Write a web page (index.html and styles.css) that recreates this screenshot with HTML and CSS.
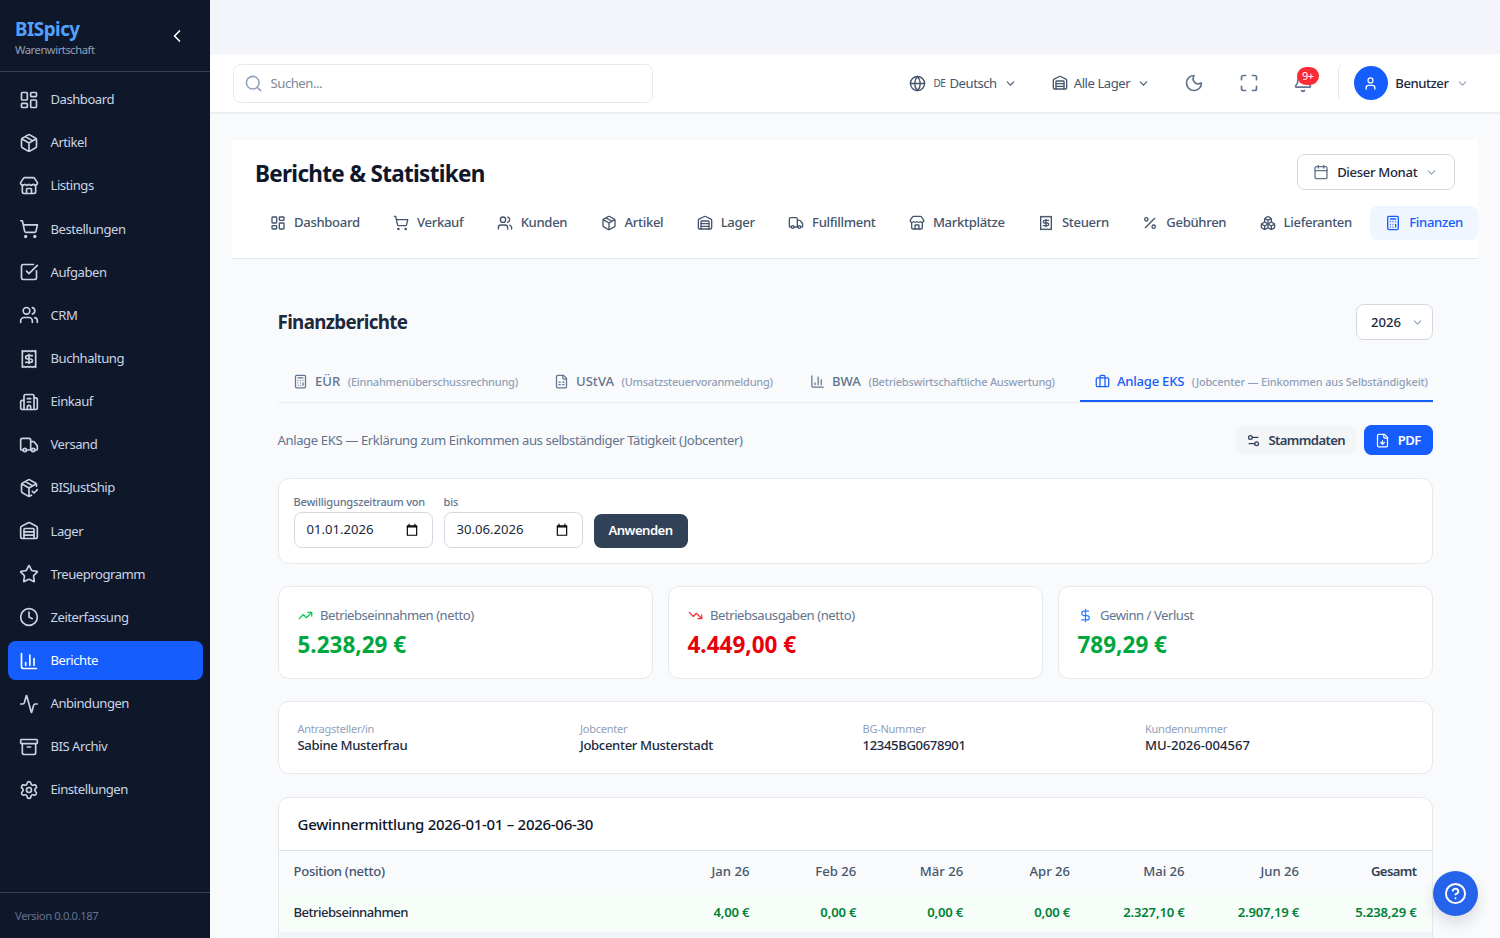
FILE: index.html
```html
<!DOCTYPE html>
<html lang="de">
<head>
    <meta charset="UTF-8">
    <meta name="viewport" content="width=device-width, initial-scale=1.0">
    <title>BISpicy - Berichte</title>
    <link rel="stylesheet" href="styles.css">
</head>
<body>
    <!-- Icons -->
    <svg class="sprite">
        <symbol id="dashboard" viewBox="0 0 24 24"><rect x="3" y="3" width="7" height="9" rx="1"/><rect x="14" y="3" width="7" height="5" rx="1"/><rect x="14" y="12" width="7" height="9" rx="1"/><rect x="3" y="16" width="7" height="5" rx="1"/></symbol>
        <symbol id="package" viewBox="0 0 24 24"><path d="M11 21.73a2 2 0 0 0 2 0l7-4A2 2 0 0 0 21 16V8a2 2 0 0 0-1-1.73l-7-4a2 2 0 0 0-2 0l-7 4A2 2 0 0 0 3 8v8a2 2 0 0 0 1 1.73zM12 22V12M3.29 7 12 12l8.71-5M7.5 4.27l9 5.15"/></symbol>
        <symbol id="store" viewBox="0 0 24 24"><path d="M15 21v-5a1 1 0 0 0-1-1h-4a1 1 0 0 0-1 1v5"/><path d="M17.774 10.31a1.12 1.12 0 0 0-1.549 0 2.5 2.5 0 0 1-3.451 0 1.12 1.12 0 0 0-1.548 0 2.5 2.5 0 0 1-3.452 0 1.12 1.12 0 0 0-1.549 0 2.5 2.5 0 0 1-3.77-3.248l2.889-4.184A2 2 0 0 1 7 2h10a2 2 0 0 1 1.653.873l2.895 4.192a2.5 2.5 0 0 1-3.774 3.244"/><path d="M4 10.95V19a2 2 0 0 0 2 2h12a2 2 0 0 0 2-2v-8.05"/></symbol>
        <symbol id="cart" viewBox="0 0 24 24"><circle cx="8" cy="21" r="1"/><circle cx="19" cy="21" r="1"/><path d="M2.05 2.05h2l2.66 12.42a2 2 0 0 0 2 1.58h9.78a2 2 0 0 0 1.95-1.57l1.65-7.43H5.12"/></symbol>
        <symbol id="check" viewBox="0 0 24 24"><path d="M21 10.5V19a2 2 0 0 1-2 2H5a2 2 0 0 1-2-2V5a2 2 0 0 1 2-2h12.344"/><path d="m9 11 3 3L22 4"/></symbol>
        <symbol id="users" viewBox="0 0 24 24"><path d="M16 21v-2a4 4 0 0 0-4-4H6a4 4 0 0 0-4 4v2"/><circle cx="9" cy="7" r="4"/><path d="M22 21v-2a4 4 0 0 0-3-3.87M16 3.13a4 4 0 0 1 0 7.75"/></symbol>
        <symbol id="receipt" viewBox="0 0 24 24"><path d="M4 2v20l2-1 2 1 2-1 2 1 2-1 2 1 2-1 2 1V2l-2 1-2-1-2 1-2-1-2 1-2-1-2 1Z"/><path d="M16 8h-6a2 2 0 1 0 0 4h4a2 2 0 1 1 0 4H8M12 17.5v-11"/></symbol>
        <symbol id="building" viewBox="0 0 24 24"><path d="M10 12h4M10 8h4M14 21v-3a2 2 0 0 0-4 0v3"/><path d="M6 10H4a2 2 0 0 0-2 2v7a2 2 0 0 0 2 2h16a2 2 0 0 0 2-2V9a2 2 0 0 0-2-2h-2"/><path d="M6 21V5a2 2 0 0 1 2-2h8a2 2 0 0 1 2 2v16"/></symbol>
        <symbol id="truck" viewBox="0 0 24 24"><path d="M14 18V6a2 2 0 0 0-2-2H4a2 2 0 0 0-2 2v11a1 1 0 0 0 1 1h2M15 18H9M19 18h2a1 1 0 0 0 1-1v-3.65a1 1 0 0 0-.22-.624l-3.48-4.35A1 1 0 0 0 17.52 8H14"/><circle cx="17" cy="18" r="2"/><circle cx="7" cy="18" r="2"/></symbol>
        <symbol id="package-check" viewBox="0 0 24 24"><path d="m16 16 2 2 4-4"/><path d="M21 10V8a2 2 0 0 0-1-1.73l-7-4a2 2 0 0 0-2 0l-7 4A2 2 0 0 0 3 8v8a2 2 0 0 0 1 1.73l7 4a2 2 0 0 0 2 0l2-1.14M7.5 4.27l9 5.15M3.29 7 12 12l8.71-5M12 22V12"/></symbol>
        <symbol id="warehouse" viewBox="0 0 24 24"><path d="M18 21V10a1 1 0 0 0-1-1H7a1 1 0 0 0-1 1v11"/><path d="M22 19a2 2 0 0 1-2 2H4a2 2 0 0 1-2-2V8a2 2 0 0 1 1.132-1.803l7.95-3.974a2 2 0 0 1 1.837 0l7.948 3.974A2 2 0 0 1 22 8zM6 13h12M6 17h12"/></symbol>
        <symbol id="star" viewBox="0 0 24 24"><path d="M11.525 2.295a.53.53 0 0 1 .95 0l2.31 4.679a2.123 2.123 0 0 0 1.595 1.16l5.166.756a.53.53 0 0 1 .294.904l-3.736 3.638a2.123 2.123 0 0 0-.611 1.878l.882 5.14a.53.53 0 0 1-.771.56l-4.618-2.428a2.122 2.122 0 0 0-1.973 0L6.396 21.01a.53.53 0 0 1-.77-.56l.881-5.139a2.122 2.122 0 0 0-.611-1.879L2.16 9.795a.53.53 0 0 1 .294-.906l5.165-.755a2.122 2.122 0 0 0 1.597-1.16z"/></symbol>
        <symbol id="clock" viewBox="0 0 24 24"><circle cx="12" cy="12" r="10"/><path d="M12 6v6l4 2"/></symbol>
        <symbol id="chart" viewBox="0 0 24 24"><path d="M3 3v16a2 2 0 0 0 2 2h16M18 17V9M13 17V5M8 17v-3"/></symbol>
        <symbol id="activity" viewBox="0 0 24 24"><path d="M22 12h-2.48a2 2 0 0 0-1.93 1.46l-2.35 8.36a.25.25 0 0 1-.48 0L9.24 2.18a.25.25 0 0 0-.48 0l-2.35 8.36A2 2 0 0 1 4.49 12H2"/></symbol>
        <symbol id="archive" viewBox="0 0 24 24"><rect x="2" y="3" width="20" height="5" rx="1"/><path d="M4 8v11a2 2 0 0 0 2 2h12a2 2 0 0 0 2-2V8M10 12h4"/></symbol>
        <symbol id="settings" viewBox="0 0 24 24"><path d="M9.671 4.136a2.34 2.34 0 0 1 4.659 0 2.34 2.34 0 0 0 3.319 1.915 2.34 2.34 0 0 1 2.33 4.033 2.34 2.34 0 0 0 0 3.831 2.34 2.34 0 0 1-2.33 4.033 2.34 2.34 0 0 0-3.319 1.915 2.34 2.34 0 0 1-4.659 0 2.34 2.34 0 0 0-3.32-1.915 2.34 2.34 0 0 1-2.33-4.033 2.34 2.34 0 0 0 0-3.831A2.34 2.34 0 0 1 6.35 6.051a2.34 2.34 0 0 0 3.319-1.915"/><circle cx="12" cy="12" r="3"/></symbol>
        <symbol id="search" viewBox="0 0 24 24"><circle cx="11" cy="11" r="8"/><path d="m21 21-4.34-4.34"/></symbol>
        <symbol id="globe" viewBox="0 0 24 24"><circle cx="12" cy="12" r="10"/><path d="M12 2a14.5 14.5 0 0 0 0 20 14.5 14.5 0 0 0 0-20M2 12h20"/></symbol>
        <symbol id="moon" viewBox="0 0 24 24"><path d="M20.985 12.486a9 9 0 1 1-9.473-9.472c.405-.022.617.46.402.803a6 6 0 0 0 8.268 8.268c.344-.215.825-.004.803.401"/></symbol>
        <symbol id="maximize" viewBox="0 0 24 24"><path d="M8 3H5a2 2 0 0 0-2 2v3M21 8V5a2 2 0 0 0-2-2h-3M3 16v3a2 2 0 0 0 2 2h3M16 21h3a2 2 0 0 0 2-2v-3"/></symbol>
        <symbol id="bell" viewBox="0 0 24 24"><path d="M10.268 21a2 2 0 0 0 3.464 0M3.262 15.326A1 1 0 0 0 4 17h16a1 1 0 0 0 .74-1.673C19.41 13.956 18 12.499 18 8A6 6 0 0 0 6 8c0 4.499-1.411 5.956-2.738 7.326"/></symbol>
        <symbol id="user" viewBox="0 0 24 24"><path d="M19 21v-2a4 4 0 0 0-4-4H9a4 4 0 0 0-4 4v2"/><circle cx="12" cy="7" r="4"/></symbol>
        <symbol id="calendar" viewBox="0 0 24 24"><path d="M8 2v4M16 2v4M3 10h18"/><rect x="3" y="4" width="18" height="18" rx="2"/></symbol>
        <symbol id="percent" viewBox="0 0 24 24"><path d="M19 5 5 19"/><circle cx="6.5" cy="6.5" r="2.5"/><circle cx="17.5" cy="17.5" r="2.5"/></symbol>
        <symbol id="boxes" viewBox="0 0 24 24"><path d="M2.97 12.92A2 2 0 0 0 2 14.63v3.24a2 2 0 0 0 .97 1.71l3 1.8a2 2 0 0 0 2.06 0L12 19v-5.5l-5-3-4.03 2.42ZM7 16.5l-4.74-2.85M7 16.5l5-3M7 16.5v5.17M12 13.5V19l3.97 2.38a2 2 0 0 0 2.06 0l3-1.8a2 2 0 0 0 .97-1.71v-3.24a2 2 0 0 0-.97-1.71L17 10.5l-5 3ZM17 16.5l-5-3M17 16.5l4.74-2.85M17 16.5v5.17M7.97 4.42A2 2 0 0 0 7 6.13v4.37l5 3 5-3V6.13a2 2 0 0 0-.97-1.71l-3-1.8a2 2 0 0 0-2.06 0l-3 1.8ZM12 8 7.26 5.15M12 8l4.74-2.85M12 13.5V8"/></symbol>
        <symbol id="calculator" viewBox="0 0 24 24"><rect x="4" y="2" width="16" height="20" rx="2"/><path d="M8 6h8M16 14v4M16 10h.01M12 10h.01M8 10h.01M12 14h.01M8 14h.01M12 18h.01M8 18h.01"/></symbol>
        <symbol id="sheet" viewBox="0 0 24 24"><path d="M15 2H6a2 2 0 0 0-2 2v16a2 2 0 0 0 2 2h12a2 2 0 0 0 2-2V7Z"/><path d="M14 2v4a2 2 0 0 0 2 2h4M8 13h2M14 13h2M8 17h2M14 17h2"/></symbol>
        <symbol id="briefcase" viewBox="0 0 24 24"><path d="M16 20V4a2 2 0 0 0-2-2h-4a2 2 0 0 0-2 2v16"/><rect x="2" y="6" width="20" height="14" rx="2"/></symbol>
        <symbol id="sliders" viewBox="0 0 24 24"><path d="M14 17H5M19 7h-9"/><circle cx="17" cy="17" r="3"/><circle cx="7" cy="7" r="3"/></symbol>
        <symbol id="file-down" viewBox="0 0 24 24"><path d="M15 2H6a2 2 0 0 0-2 2v16a2 2 0 0 0 2 2h12a2 2 0 0 0 2-2V7Z"/><path d="M14 2v4a2 2 0 0 0 2 2h4M12 18v-6M9 15l3 3 3-3"/></symbol>
        <symbol id="trend-up" viewBox="0 0 24 24"><path d="M16 7h6v6M22 7l-8.5 8.5-5-5L2 17"/></symbol>
        <symbol id="trend-down" viewBox="0 0 24 24"><path d="M16 17h6v-6M22 17l-8.5-8.5-5 5L2 7"/></symbol>
        <symbol id="dollar" viewBox="0 0 24 24"><path d="M12 2v20M17 5H9.5a3.5 3.5 0 0 0 0 7h5a3.5 3.5 0 0 1 0 7H6"/></symbol>
        <symbol id="help" viewBox="0 0 24 24"><circle cx="12" cy="12" r="10"/><path d="M9.09 9a3 3 0 0 1 5.83 1c0 2-3 3-3 3M12 17h.01"/></symbol>
        <symbol id="down" viewBox="0 0 24 24"><path d="m6 9 6 6 6-6"/></symbol>
        <symbol id="left" viewBox="0 0 24 24"><path d="m15 18-6-6 6-6"/></symbol>
        <symbol id="date" viewBox="0 0 24 24"><path d="M4 5h16v16H4z"/><path d="M4 6.5h16M7 2v3M17 2v3"/></symbol>
    </svg>

    <aside class="sidebar">
        <div class="brand">
            <div>
                <div class="brand-name">BISpicy</div>
                <div class="brand-sub">Warenwirtschaft</div>
            </div>
            <svg class="icon collapse"><use href="#left"/></svg>
        </div>
        <nav class="menu">
            <a class="menu-item"><svg class="icon"><use href="#dashboard"/></svg>Dashboard</a>
            <a class="menu-item"><svg class="icon"><use href="#package"/></svg>Artikel</a>
            <a class="menu-item"><svg class="icon"><use href="#store"/></svg>Listings</a>
            <a class="menu-item"><svg class="icon"><use href="#cart"/></svg>Bestellungen</a>
            <a class="menu-item"><svg class="icon"><use href="#check"/></svg>Aufgaben</a>
            <a class="menu-item"><svg class="icon"><use href="#users"/></svg>CRM</a>
            <a class="menu-item"><svg class="icon"><use href="#receipt"/></svg>Buchhaltung</a>
            <a class="menu-item"><svg class="icon"><use href="#building"/></svg>Einkauf</a>
            <a class="menu-item"><svg class="icon"><use href="#truck"/></svg>Versand</a>
            <a class="menu-item"><svg class="icon"><use href="#package-check"/></svg>BISJustShip</a>
            <a class="menu-item"><svg class="icon"><use href="#warehouse"/></svg>Lager</a>
            <a class="menu-item"><svg class="icon"><use href="#star"/></svg>Treueprogramm</a>
            <a class="menu-item"><svg class="icon"><use href="#clock"/></svg>Zeiterfassung</a>
            <a class="menu-item active"><svg class="icon"><use href="#chart"/></svg>Berichte</a>
            <a class="menu-item"><svg class="icon"><use href="#activity"/></svg>Anbindungen</a>
            <a class="menu-item"><svg class="icon"><use href="#archive"/></svg>BIS Archiv</a>
            <a class="menu-item"><svg class="icon"><use href="#settings"/></svg>Einstellungen</a>
        </nav>
        <div class="version">Version 0.0.0.187</div>
    </aside>

    <div class="main">
        <header class="topbar">
            <div class="search">
                <svg class="icon"><use href="#search"/></svg>
                <span>Suchen...</span>
            </div>
            <div class="tools">
                <div class="tool language"><svg class="icon"><use href="#globe"/></svg><small>DE</small><span>Deutsch</span><svg class="icon chevron"><use href="#down"/></svg></div>
                <div class="tool depot"><svg class="icon"><use href="#warehouse"/></svg><span>Alle Lager</span><svg class="icon chevron"><use href="#down"/></svg></div>
                <svg class="icon tool-icon"><use href="#moon"/></svg>
                <svg class="icon tool-icon"><use href="#maximize"/></svg>
                <div class="bell"><svg class="icon tool-icon"><use href="#bell"/></svg><span class="badge">9+</span></div>
                <div class="account">
                    <span class="avatar"><svg class="icon"><use href="#user"/></svg></span>
                    <span>Benutzer</span>
                    <svg class="icon chevron"><use href="#down"/></svg>
                </div>
            </div>
        </header>

        <section class="report-head">
            <div class="report-title">
                <h1>Berichte &amp; Statistiken</h1>
                <button class="select period"><svg class="icon"><use href="#calendar"/></svg>Dieser Monat<svg class="icon chevron"><use href="#down"/></svg></button>
            </div>
            <nav class="report-tabs">
                <a class="report-tab"><svg class="icon"><use href="#dashboard"/></svg>Dashboard</a>
                <a class="report-tab"><svg class="icon"><use href="#cart"/></svg>Verkauf</a>
                <a class="report-tab"><svg class="icon"><use href="#users"/></svg>Kunden</a>
                <a class="report-tab"><svg class="icon"><use href="#package"/></svg>Artikel</a>
                <a class="report-tab"><svg class="icon"><use href="#warehouse"/></svg>Lager</a>
                <a class="report-tab"><svg class="icon"><use href="#truck"/></svg>Fulfillment</a>
                <a class="report-tab"><svg class="icon"><use href="#store"/></svg>Marktplätze</a>
                <a class="report-tab"><svg class="icon"><use href="#receipt"/></svg>Steuern</a>
                <a class="report-tab"><svg class="icon"><use href="#percent"/></svg>Gebühren</a>
                <a class="report-tab"><svg class="icon"><use href="#boxes"/></svg>Lieferanten</a>
                <a class="report-tab active"><svg class="icon"><use href="#calculator"/></svg>Finanzen</a>
            </nav>
        </section>

        <main class="finance">
            <div class="finance-title">
                <h2>Finanzberichte</h2>
                <button class="select year">2026<svg class="icon chevron"><use href="#down"/></svg></button>
            </div>

            <nav class="finance-tabs">
                <a class="finance-tab"><svg class="icon"><use href="#calculator"/></svg>EÜR<small>(Einnahmenüberschussrechnung)</small></a>
                <a class="finance-tab"><svg class="icon"><use href="#sheet"/></svg>UStVA<small>(Umsatzsteuervoranmeldung)</small></a>
                <a class="finance-tab"><svg class="icon"><use href="#chart"/></svg>BWA<small>(Betriebswirtschaftliche Auswertung)</small></a>
                <a class="finance-tab active"><svg class="icon"><use href="#briefcase"/></svg>Anlage EKS<small>(Jobcenter — Einkommen aus Selbständigkeit)</small></a>
            </nav>

            <div class="intro">
                <p>Anlage EKS — Erklärung zum Einkommen aus selbständiger Tätigkeit (Jobcenter)</p>
                <button class="btn btn-light"><svg class="icon"><use href="#sliders"/></svg>Stammdaten</button>
                <button class="btn btn-primary"><svg class="icon"><use href="#file-down"/></svg>PDF</button>
            </div>

            <div class="card filter">
                <div class="field">
                    <label>Bewilligungszeitraum von</label>
                    <div class="date-input">01.01.2026<svg class="icon"><use href="#date"/></svg></div>
                </div>
                <div class="field">
                    <label>bis</label>
                    <div class="date-input">30.06.2026<svg class="icon"><use href="#date"/></svg></div>
                </div>
                <button class="btn btn-dark">Anwenden</button>
            </div>

            <div class="stats">
                <div class="card stat">
                    <div class="stat-label"><svg class="icon green"><use href="#trend-up"/></svg>Betriebseinnahmen (netto)</div>
                    <div class="stat-value">5.238,29 €</div>
                </div>
                <div class="card stat">
                    <div class="stat-label"><svg class="icon red"><use href="#trend-down"/></svg>Betriebsausgaben (netto)</div>
                    <div class="stat-value negative">4.449,00 €</div>
                </div>
                <div class="card stat">
                    <div class="stat-label"><svg class="icon blue"><use href="#dollar"/></svg>Gewinn / Verlust</div>
                    <div class="stat-value">789,29 €</div>
                </div>
            </div>

            <div class="card person">
                <div><span>Antragsteller/in</span><b>Sabine Musterfrau</b></div>
                <div><span>Jobcenter</span><b>Jobcenter Musterstadt</b></div>
                <div><span>BG-Nummer</span><b>12345BG0678901</b></div>
                <div><span>Kundennummer</span><b class="number">MU-2026-004567</b></div>
            </div>

            <div class="card result">
                <h3>Gewinnermittlung 2026-01-01 – 2026-06-30</h3>
                <table>
                    <colgroup>
                        <col class="col-name">
                        <col class="col-month" span="4">
                        <col class="col-wide" span="2">
                        <col>
                    </colgroup>
                    <thead>
                        <tr><th>Position (netto)</th><th>Jan 26</th><th>Feb 26</th><th>Mär 26</th><th>Apr 26</th><th>Mai 26</th><th>Jun 26</th><th class="total">Gesamt</th></tr>
                    </thead>
                    <tbody>
                        <tr class="income"><td>Betriebseinnahmen</td><td>4,00 €</td><td>0,00 €</td><td>0,00 €</td><td>0,00 €</td><td>2.327,10 €</td><td>2.907,19 €</td><td>5.238,29 €</td></tr>
                        <tr class="next"><td colspan="8"></td></tr>
                    </tbody>
                </table>
            </div>
        </main>
    </div>

    <button class="help"><svg class="icon"><use href="#help"/></svg></button>
</body>
</html>
```
FILE: styles.css
```css
* {
    box-sizing: border-box;
}
body {
    margin: 0;
    display: flex;
    height: 938px;
    overflow: hidden;
    background: #f9fafc;
    color: #1d293d;
    font-family: "Noto Sans", "Open Sans", sans-serif;
    font-size: 13.1px;
    line-height: 19px;
}
h1, h2, h3, p {
    margin: 0;
}
button {
    border: 0;
    padding: 0;
    font: inherit;
    letter-spacing: inherit;
    color: inherit;
}
.sprite {
    position: absolute;
    width: 0;
    height: 0;
}
.icon {
    width: 15px;
    height: 15px;
    flex: none;
    fill: none;
    stroke: currentColor;
    stroke-width: 2;
    stroke-linecap: round;
    stroke-linejoin: round;
}

/* Sidebar */
.sidebar {
    width: 210px;
    flex: none;
    display: flex;
    flex-direction: column;
    background: #0f172b;
    color: #cad5e2;
    letter-spacing: -0.48px;
}
.brand {
    display: flex;
    justify-content: space-between;
    align-items: center;
    height: 72px;
    padding: 0 23px 0 15px;
    border-bottom: 1px solid #314158;
}
.brand-name {
    font-size: 18.75px;
    line-height: 28px;
    font-weight: 700;
    color: #51a2ff;
}
.brand-sub {
    font-size: 11.25px;
    line-height: 13px;
    color: #90a1b9;
}
.collapse {
    width: 20px;
    height: 20px;
    color: #fff;
}
.menu {
    flex: 1;
    display: flex;
    flex-direction: column;
    gap: 3.75px;
    padding: 8px 7.5px;
}
.menu-item {
    display: flex;
    align-items: center;
    gap: 12px;
    height: 39.4px;
    padding: 0 11px;
    border-radius: 7.5px;
}
.menu-item .icon {
    width: 20px;
    height: 20px;
}
.menu-item.active {
    background: #155dfc;
    color: #fff;
}
.version {
    height: 46px;
    padding: 15px;
    border-top: 1px solid #314158;
    font-size: 11.25px;
    line-height: 15px;
    letter-spacing: -0.4px;
    color: #62748e;
}

/* Header */
.main {
    flex: 1;
    min-width: 0;
    padding-top: 54.5px;
    background: linear-gradient(#f4f5fa 54px, #f9fafc 54px);
}
.topbar {
    display: flex;
    justify-content: space-between;
    align-items: center;
    height: 59px;
    padding: 0 31px 0 22.5px;
    background: #fff;
    border-bottom: 2px solid #eceef1;
    letter-spacing: -0.45px;
}
.search {
    display: flex;
    align-items: center;
    gap: 8px;
    width: 420px;
    height: 39px;
    padding: 0 10px;
    border: 1px solid #e5e9ef;
    border-radius: 7.5px;
    color: #808896;
}
.search .icon {
    width: 19px;
    height: 19px;
    color: #90a1b9;
}
.tools, .tool, .account {
    display: flex;
    align-items: center;
    color: #45556c;
}
.tool small {
    margin: 0 4px 0 8px;
    font-size: 10px;
}
.tool .icon {
    width: 17px;
    height: 17px;
}
.tool .chevron, .account .chevron {
    width: 13px;
    height: 13px;
    margin-left: 7px;
}
.depot {
    margin-left: 35px;
}
.depot .icon:first-child {
    width: 16px;
    height: 16px;
}
.depot span {
    margin-left: 6px;
}
.tool-icon {
    display: block;
    width: 20px;
    height: 20px;
    margin-left: 34.2px;
    color: #62748e;
}
.bell {
    position: relative;
}
.badge {
    position: absolute;
    top: -6px;
    right: -6px;
    padding: 0 4px;
    min-width: 22px;
    height: 18px;
    border-radius: 9px;
    background: #fb2c36;
    color: #fff;
    font-size: 11px;
    line-height: 18px;
    text-align: center;
}
.account {
    gap: 7.5px;
    height: 38px;
    margin-left: 25px;
    padding-left: 15px;
    border-left: 1px solid #e2e8f0;
    border-radius: 6px 0 0 6px;
    color: #1d293d;
    font-weight: 500;
}
.avatar {
    display: flex;
    align-items: center;
    justify-content: center;
    width: 34px;
    height: 34px;
    border-radius: 50%;
    background: #155dfc;
    color: #fff;
}
.account .chevron {
    margin-left: 0;
    color: #90a1b9;
}

/* Report navigation */
.report-head {
    height: 119px;
    margin: 26.5px 22px 0;
    padding-left: 23px;
    background: #fff;
    border-bottom: 1px solid #e2e8f0;
    letter-spacing: -0.33px;
}
.report-title {
    display: flex;
    justify-content: space-between;
    align-items: flex-start;
    padding: 14px 23px 0 0;
    color: #0f172b;
}
h1 {
    margin-top: 2px;
    font-size: 22.5px;
    line-height: 36px;
    font-weight: 700;
    letter-spacing: -0.7px;
}
.select {
    display: flex;
    align-items: center;
    justify-content: center;
    height: 36px;
    border: 1px solid #d3d8e0;
    border-radius: 7.5px;
    background: #fff;
    color: #1d293d;
    font-weight: 500;
}
.select .chevron {
    width: 13px;
    height: 13px;
    color: #90a1b9;
}
.period {
    width: 158.5px;
    gap: 8px;
}
.period .icon:first-child {
    width: 16px;
    height: 16px;
    color: #62748e;
}
.report-tabs {
    display: flex;
    justify-content: space-between;
    margin-top: 13.5px;
}
.report-tab {
    display: flex;
    align-items: center;
    gap: 8px;
    height: 34px;
    padding: 0 15px;
    border-radius: 7.5px;
    color: #45556c;
    font-weight: 500;
    white-space: nowrap;
}
.report-tab .icon {
    width: 16px;
    height: 16px;
}
.report-tab.active {
    background: #eff6ff;
    color: #155dfc;
}

/* Finance */
.finance {
    padding: 45px 67.5px 0;
}
.finance-title, .intro {
    display: flex;
    justify-content: space-between;
    align-items: center;
}
h2 {
    font-size: 18.75px;
    line-height: 36px;
    font-weight: 700;
    letter-spacing: -0.65px;
}
.year {
    width: 77px;
    gap: 10px;
    padding-left: 7px;
}
.finance-tabs {
    display: grid;
    grid-template-columns: 261px 256px 285px 353px;
    height: 42px;
    margin-top: 21px;
    border-bottom: 1.5px solid #e8ebf0;
}
.finance-tab {
    display: flex;
    align-items: center;
    gap: 7.5px;
    padding: 0 0 1px 15px;
    color: #62748e;
    font-weight: 500;
    white-space: nowrap;
}
.finance-tab small {
    font-size: 11px;
    letter-spacing: -0.24px;
    color: #90a1b9;
}
.finance-tab.active {
    color: #155dfc;
    border-bottom: 2px solid #155dfc;
    padding-top: 2px;
    letter-spacing: -0.25px;
}
.finance-tab.active small {
    letter-spacing: -0.17px;
}
.intro {
    margin-top: 22px;
    gap: 8px;
}
.intro p {
    flex: 1;
    color: #62748e;
    letter-spacing: -0.39px;
}
.btn {
    display: flex;
    align-items: center;
    justify-content: center;
    gap: 7.5px;
    height: 30px;
    border-radius: 7.5px;
    font-weight: 600;
    letter-spacing: -0.6px;
}
.btn-light {
    width: 120px;
    background: #f4f5f7;
    color: #314158;
}
.btn-primary {
    width: 69px;
    background: #155dfc;
    color: #fff;
}
.btn-dark {
    width: 94px;
    height: 34px;
    background: #314158;
    color: #fff;
    letter-spacing: -0.5px;
}
.card {
    border: 1px solid #e5e9ee;
    border-radius: 11px;
    background: #fff;
}
.filter {
    display: flex;
    align-items: flex-end;
    gap: 11px;
    height: 86px;
    margin-top: 22.5px;
    padding: 0 15px 15px;
}
.field label {
    display: block;
    margin-bottom: 3px;
    font-size: 11px;
    line-height: 15px;
    font-weight: 500;
    letter-spacing: -0.18px;
    color: #62748e;
    white-space: nowrap;
}
.date-input {
    display: flex;
    align-items: center;
    justify-content: space-between;
    width: 139px;
    height: 36px;
    padding: 0 13px 0 12px;
    border: 1px solid #d3d8e0;
    border-radius: 7.5px;
}
.date-input .icon {
    width: 14px;
    height: 14px;
    color: #000;
}
.stats {
    display: grid;
    grid-template-columns: repeat(3, 1fr);
    gap: 15px;
    margin-top: 22.5px;
}
.stat {
    height: 92.5px;
    padding: 19px;
}
.stat-label {
    display: flex;
    align-items: center;
    gap: 7.5px;
    color: #62748e;
    letter-spacing: -0.47px;
}
.stat-value {
    margin-top: 5px;
    font-size: 22.5px;
    line-height: 30px;
    font-weight: 700;
    color: #00a63e;
}
.negative {
    color: #e7000b;
}
.green {
    color: #00c950;
}
.red {
    color: #fb2c36;
}
.blue {
    color: #2b7fff;
}
.person {
    display: grid;
    grid-template-columns: repeat(4, 1fr);
    gap: 15px;
    height: 73px;
    margin-top: 22.5px;
    padding: 19px;
}
.person span, .person b {
    display: block;
    line-height: 16px;
}
.person span {
    font-size: 11px;
    letter-spacing: -0.25px;
    color: #90a1b9;
}
.person b {
    font-weight: 500;
    letter-spacing: -0.35px;
}
.person .number {
    letter-spacing: 0;
}
.result {
    margin-top: 23px;
    overflow: hidden;
}
h3 {
    padding: 16.5px 19px 17.5px;
    font-size: 15px;
    line-height: 18px;
    font-weight: 500;
    letter-spacing: -0.28px;
    color: #0f172b;
}
table {
    width: 100%;
    table-layout: fixed;
    border-collapse: collapse;
}
.col-name {
    width: 379px;
}
.col-month {
    width: 106.9px;
}
.col-wide {
    width: 114.5px;
}
th, td {
    height: 40px;
    padding: 0 15px;
    text-align: right;
    font-weight: 500;
}
th {
    height: 41.5px;
    border-top: 1px solid #dde2e9;
    background: #f8fafc;
    color: #45556c;
}
th:first-child, td:first-child {
    text-align: left;
    letter-spacing: -0.3px;
}
.total {
    color: #314158;
    font-weight: 600;
    letter-spacing: -0.6px;
}
.income td {
    background: #f7fef9;
    color: #008236;
    font-weight: 600;
    letter-spacing: -0.18px;
}
.income td:first-child {
    color: #1d293d;
    font-weight: 500;
    letter-spacing: -0.53px;
}
.next td {
    background: #f1f5f9;
}

.help {
    position: fixed;
    right: 22.5px;
    bottom: 22.5px;
    display: flex;
    align-items: center;
    justify-content: center;
    width: 45px;
    height: 45px;
    border-radius: 50%;
    background: #2563eb;
    color: #fff;
    box-shadow: 0 8px 14px rgba(15, 23, 43, 0.12);
}
.help .icon {
    width: 23px;
    height: 23px;
}
```
